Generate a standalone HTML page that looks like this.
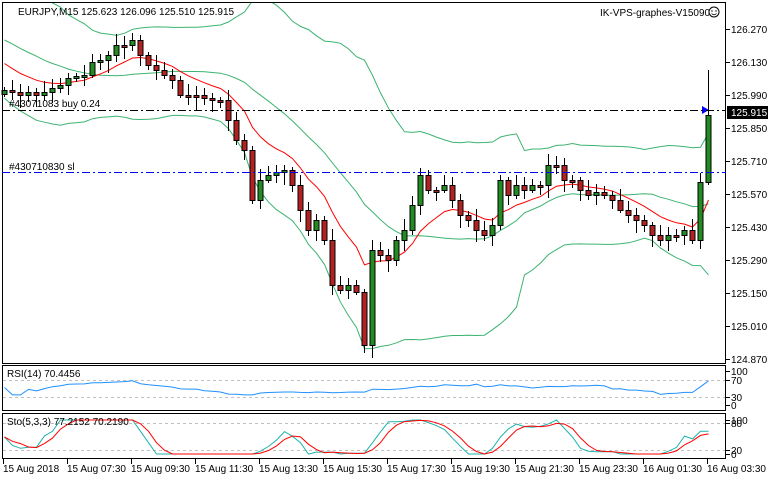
<!DOCTYPE html>
<html><head><meta charset="utf-8"><style>
html,body{margin:0;padding:0;background:#fff;width:768px;height:480px;overflow:hidden}
svg{display:block;font-family:"Liberation Sans",sans-serif;font-size:10px}
</style></head><body>
<svg id="s" width="768" height="480" xmlns="http://www.w3.org/2000/svg">
<rect x="0" y="0" width="768" height="480" fill="#fff"/>
<g id="g"></g>
<rect x="0" y="0" width="768" height="2" fill="#fff"/>
<rect x="2.5" y="2.5" width="723" height="361" fill="none" stroke="#000"/>
<rect x="2.5" y="365.5" width="723" height="45" fill="none" stroke="#000"/>
<rect x="2.5" y="413.5" width="723" height="45" fill="none" stroke="#000"/>
<line x1="2" y1="110.5" x2="726" y2="110.5" stroke="#000" stroke-dasharray="8,3,2,3"/>
<line x1="2" y1="172.5" x2="726" y2="172.5" stroke="#00f" stroke-dasharray="8,3,2,3"/>
<text x="9" y="107" fill="#000">#43071083 buy 0.24</text>
<text x="9" y="170" fill="#000">#430710830 sl</text>
<text x="18" y="15" fill="#000">EURJPY,M15  125.623 126.096 125.510 125.915</text>
<text x="600" y="16" fill="#000">IK-VPS-graphes-V150901</text>
<circle cx="714" cy="12" r="5" fill="#fff" stroke="#000"/>
<circle cx="712" cy="11" r="0.7" fill="#000"/><circle cx="716" cy="11" r="0.7" fill="#000"/>
<path d="M711.5 13.5 Q714 16 716.5 13.5" fill="none" stroke="#000" stroke-width="0.8"/>
<text x="7" y="377" fill="#000">RSI(14) 70.4456</text>
<text x="7" y="425" fill="#000">Sto(5,3,3) 77.2152 70.2190</text>
<rect x="727" y="106" width="41" height="13" fill="#000"/>
<text x="731" y="116" fill="#fff">125.915</text>
<g id="ax" fill="#000"></g>
</svg>
<script>
var kp=[[4,90],[12,92],[20,95],[28,92],[36,95],[44,92],[52,88],[60,85],[68,78],[76,76],[84,75],[92,62],[100,60],[108,55],[116,45],[124,45],[132,40],[140,55],[148,65],[156,70],[164,75],[172,80],[180,95],[188,95],[196,95],[204,98],[212,100],[220,100],[228,120],[236,140],[244,150],[252,200],[260,180],[268,175],[276,172],[284,170],[292,185],[300,210],[308,230],[316,220],[324,240],[332,285],[340,290],[348,285],[356,292],[364,345],[372,250],[380,255],[388,260],[396,240],[404,230],[412,205],[420,175],[428,190],[436,190],[444,185],[452,200],[460,215],[468,220],[476,230],[484,235],[492,225],[500,180],[508,195],[516,185],[524,190],[532,185],[540,185],[548,165],[556,165],[564,180],[572,180],[580,190],[588,195],[596,192],[604,195],[612,200],[620,210],[628,215],[636,220],[644,225],[652,235],[660,240],[668,235],[676,235],[684,230],[692,240],[700,182],[708,115]];
var cy=kp.map(function(p){return p[1]});
var NS="http://www.w3.org/2000/svg",g=document.getElementById('g'),ax=document.getElementById('ax');
function el(t,a,p){var e=document.createElementNS(NS,t);for(var k in a)e.setAttribute(k,a[k]);(p||g).appendChild(e);return e;}
var n=cy.length;function X(i){return kp[i][0]+0.5;}
[380,397,423,450].forEach(function(y){el('line',{x1:3,y1:y+.5,x2:725,y2:y+.5,stroke:'#c0c0c0','stroke-dasharray':'3,3'});});
var pad=[10,5,15,20,10,25,30,20,35,40,30,45,50,40,55,60,65,75,80];var all=pad.concat(cy);
var mid=[],up=[],lo=[];
for(var i=0;i<n;i++){var s=0,w=all.slice(i,i+20);w.forEach(function(v){s+=v});var m=s/20,q=0;w.forEach(function(v){q+=(v-m)*(v-m)});var sd=Math.sqrt(q/20);mid.push(m);up.push(m-2*sd-10);lo.push(m+2*sd+10);}
var ema=[],e=60;for(var i=0;i<all.length;i++){e=e+(all[i]-e)*2/11;if(i>=19)ema.push(e);}
function pl(arr,col){el('polyline',{points:arr.map(function(v,i){return X(i)+','+v.toFixed(1)}).join(' '),fill:'none',stroke:col});}
pl(up,'#3cb371');pl(lo,'#3cb371');pl(mid,'#3cb371');pl(ema,'#f00');
for(var i=0;i<n;i++){var o=i?cy[i-1]:cy[0]+4,c=cy[i];var t=Math.min(o,c),b=Math.max(o,c);if(b-t<2){b=t+2;}
var hw=3+((i*7)%9),lw=3+((i*5)%11);if(i==n-1)hw=45;
el('line',{x1:X(i),y1:t-hw,x2:X(i),y2:b+lw,stroke:'#000'});
el('rect',{x:X(i)-2.5,y:t+.5,width:5,height:b-t,fill:c<o?'#228b22':'#b22222',stroke:'#000'});}
el('path',{d:'M702 106 L709 110 L702 114 Z',fill:'#00f'});
var rsi=[];for(var i=0;i<n;i++){var gU=0,gD=0;for(var j=Math.max(1,i-13);j<=i;j++){var d=cy[j-1]-cy[j];if(d>0)gU+=d;else gD-=d;}var r=(gU+gD)?100*gU/(gU+gD):50;r=50+(r-50)*0.45;rsi.push(r);}
rsi[n-1]=70.4;
el('polyline',{points:rsi.map(function(v,i){return X(i)+','+(404-v*0.33).toFixed(1)}).join(' '),fill:'none',stroke:'#1e90ff'});
var k=[];for(var i=0;i<n;i++){var w=cy.slice(Math.max(0,i-4),i+1),hi=Math.min.apply(0,w),lo2=Math.max.apply(0,w);k.push(lo2==hi?50:100*(lo2-cy[i])/(lo2-hi));}
var ks=k.map(function(v,i){var w=k.slice(Math.max(0,i-2),i+1);return w.reduce(function(a,b){return a+b})/w.length});
var ds=ks.map(function(v,i){var w=ks.slice(Math.max(0,i-2),i+1);return w.reduce(function(a,b){return a+b})/w.length});
function sy(v){return (454-v*0.34).toFixed(1)}
el('polyline',{points:ks.map(function(v,i){return X(i)+','+sy(v)}).join(' '),fill:'none',stroke:'#20b2aa'});
el('polyline',{points:ds.map(function(v,i){return X(i)+','+sy(v)}).join(' '),fill:'none',stroke:'#f00'});
var pr=['126.270','126.130','125.990','125.850','125.710','125.570','125.430','125.290','125.150','125.010','124.870'];
pr.forEach(function(p,i){var y=29+i*33;el('line',{x1:726,y1:y+.5,x2:730,y2:y+.5,stroke:'#000'},ax);var t=el('text',{x:731,y:y+4},ax);t.textContent=p;});
[['100',371],['70',380],['30',397],['0',405]].forEach(function(a){el('line',{x1:726,y1:a[1]+.5,x2:730,y2:a[1]+.5,stroke:'#000'},ax);var t=el('text',{x:731,y:a[1]+4},ax);t.textContent=a[0];});
[['100',420],['80',423],['20',450],['0',454]].forEach(function(a){el('line',{x1:726,y1:a[1]+.5,x2:730,y2:a[1]+.5,stroke:'#000'},ax);var t=el('text',{x:731,y:a[1]+4},ax);t.textContent=a[0];});
var tl=['15 Aug 2018','15 Aug 07:30','15 Aug 09:30','15 Aug 11:30','15 Aug 13:30','15 Aug 15:30','15 Aug 17:30','15 Aug 19:30','15 Aug 21:30','15 Aug 23:30','16 Aug 01:30','16 Aug 03:30'];
tl.forEach(function(s,i){var x=3+i*64;el('line',{x1:x+.5,y1:459,x2:x+.5,y2:464,stroke:'#000'},ax);var t=el('text',{x:x,y:472},ax);t.textContent=s;});
</script>
</body></html>
